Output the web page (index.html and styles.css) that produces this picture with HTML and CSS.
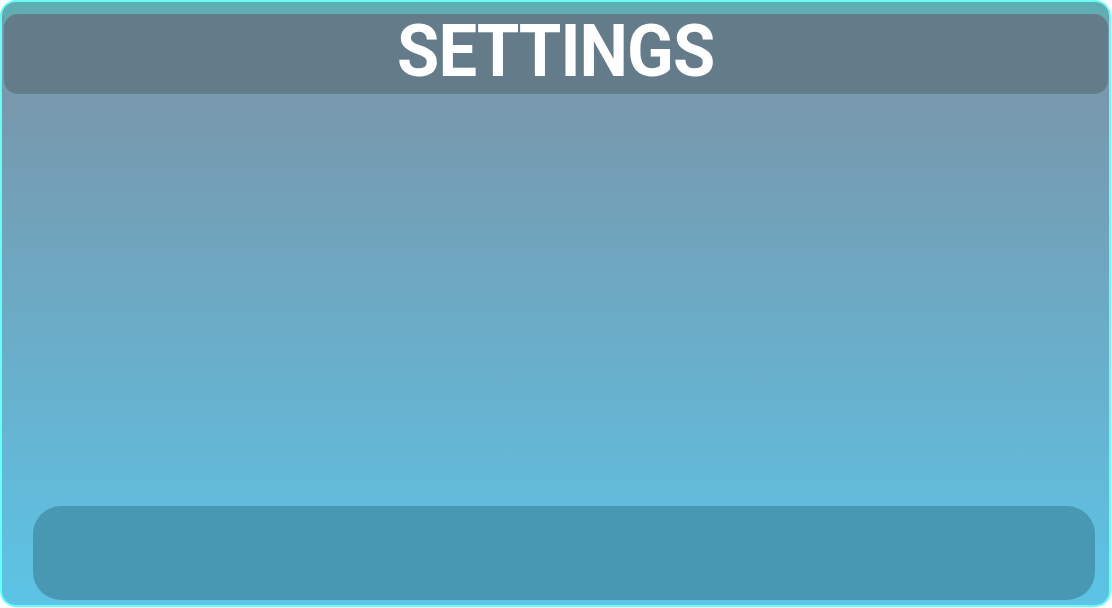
FILE: index.html
```html
<!DOCTYPE html>
<html lang="en">
<head>
<meta charset="utf-8">
<title>Settings</title>
<link rel="stylesheet" href="styles.css">
</head>
<body>
<div class="panel">
  <header class="panel-header">
    <h1 class="panel-title">SETTINGS</h1>
  </header>
  <main class="panel-body"></main>
  <footer class="panel-footer"></footer>
</div>
</body>
</html>
```

FILE: styles.css
```css
html, body {
  margin: 0;
  padding: 0;
  background: #ffffff;
}

.panel {
  box-sizing: border-box;
  width: 1111px;
  height: 607px;
  border: 2px solid #66fff6;
  border-radius: 16px;
  background: linear-gradient(to bottom, #60adb4 0, #60adb4 14px, #7898ad 14px, #7898ad 95px, #5cc4e6 100%);
  padding: 12px 0 5px 2px;
  display: flex;
  flex-direction: column;
  overflow: hidden;
}

.panel-header {
  height: 80px;
  margin-right: 1px;
  background: #647b8a;
  border-radius: 14px;
  box-shadow: 0 -10px 0 0 #60adb4;
  display: flex;
  align-items: center;
  justify-content: center;
}

.panel-title {
  margin: 0;
  font-family: Roboto, "Liberation Sans", sans-serif;
  font-weight: 700;
  font-size: 73px;
  line-height: 1;
  letter-spacing: -1px;
  color: #ffffff;
  position: relative;
  top: -3px;
  transform: scaleX(0.94);
}

.panel-body {
  flex: 1;
}

.panel-footer {
  height: 94px;
  margin: 0 14px 0 29px;
  background: #4898b3;
  border-radius: 28px;
}
```
